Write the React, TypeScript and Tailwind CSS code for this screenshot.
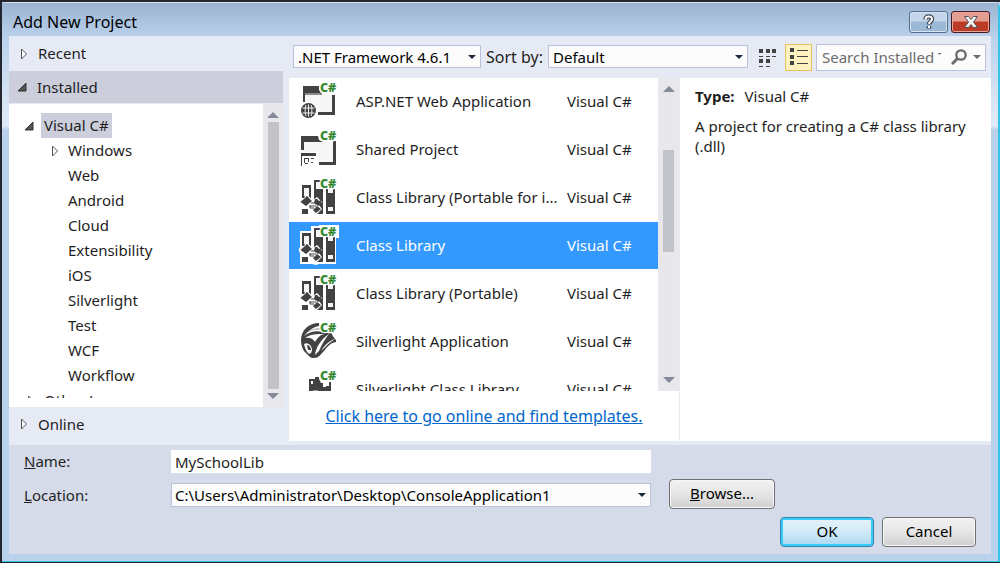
import type { ReactNode } from 'react';

const DARK = '#424242';

function CSharpMark() {
  return (
    <text
      x="21"
      y="10"
      fontFamily="Open Sans, Noto Sans, sans-serif"
      fontSize="12.5"
      fontWeight="800"
      fill="#388a34"
      stroke="#fff"
      strokeWidth="2.5"
      style={{ paintOrder: 'stroke' }}
    >
      C#
    </text>
  );
}

function IconFrame({ children }: { children: ReactNode }) {
  return (
    <svg viewBox="0 0 40 40" className="size-10 shrink-0 overflow-visible" aria-hidden="true">
      {children}
      <CSharpMark />
    </svg>
  );
}

function WebAppIcon() {
  return (
    <IconFrame>
      <path d="M6 13H34V30H6z" fill="#f7f7f7" />
      <path d="M4 4H20V8L22 11V11H4z" fill={DARK} />
      <path d="M5 11H23V13H5z" fill="#8a8a8a" />
      <path d="M4 11H6V20H4zM33 13H36V33H19V30H33z" fill={DARK} />
      <circle cx="9.5" cy="28.5" r="9" fill="#fff" />
      <circle cx="9.5" cy="28.5" r="7.5" fill={DARK} />
      <path d="M3.5 26H15.5M3.5 31H15.5M9.5 22.5V34.5M7 23C5.8 26 5.8 31 7 34M12 23C13.2 26 13.2 31 12 34" stroke="#f0f0f0" strokeWidth="1" fill="none" />
    </IconFrame>
  );
}

function SharedIcon() {
  return (
    <IconFrame>
      <path d="M4 12H35V32H4z" fill="#f7f7f7" />
      <path d="M2 6H19L20 10L24 12H2zM2 12H5V20H2zM34 11H37V35H20V32H34z" fill={DARK} />
      <path d="M1 22H18V37H1z" fill="#fff" />
      <path d="M2 23H17V26H2zM2 26H3V36H2zM5 28H10V29H6V33H5zM6 33H9V34H6zM9 29H10V32H9zM12 28H15V29H12zM12 32H14V33H12z" fill={DARK} />
    </IconFrame>
  );
}

function LibraryIcon({ selected = false }: { selected?: boolean }) {
  return (
    <IconFrame>
      {selected && <path d="M1 5H12V0H20V-1H40V12H37V38H20L17 39L13 38H1V27L-.5 24L1 21z" fill="#fff" />}
      <path d="M3 7H12V20H3z" fill={DARK} />
      <path d="M5 10H10V18H5z" fill="#f5f5f5" />
      <path d="M3 31H9V36H3zM15 2H22V11H24V36H15z" fill={DARK} />
      <path d="M17 4H22V11H17z" fill="#f5f5f5" />
      <path d="M27 11H36V36H27z" fill={DARK} />
      <path d="M29 10H34V15H29zM29 29H34V33H29z" fill="#f5f5f5" />
      <path d="M7 16L14 22L18 19L23 24L20 27L23 31L17 37L9 31L2 26z" fill="#fff" />
      <path d="M8 18L13 23L7 28L1.500 24zM16 21H18L20 23L22 22V26L19 28L15 25zM18 28L22 31L17 35L14 32z" fill={DARK} />
      <path d="M12 25H17M11 27V30H15M11 28H17" stroke={DARK} strokeWidth="1" fill="none" />
    </IconFrame>
  );
}

function SilverlightIcon() {
  return (
    <IconFrame>
      <path d="M2 18C2 8 10 1 20 1L20 4C14 5 9 9 5 14C10 10 17 8 24 10L32 10C34 15 36 17 37 18V20C31 21 28 25 25 29C21 33 20 36 15 36C11 36 10 34 8 32C4 29 2 24 2 18z" fill={DARK} />
      <path d="M6 12C10 8 15 6 20 6L22 8C15 7 10 9 6 12z" fill="#bbb" />
      <path d="M6 16C11 12 18 12 25 12C21 13 18 16 16 20C14 16 10 15 6 16zM16 33C17 26 21 18 30 12C26 17 23 22 20 29L16 33zM5 22C8 20 12 22 13 27C13 31 11 33 9 31C7 29 6 26 5 22zM22 29C26 22 32 18 36 17C31 20 27 24 22 29z" fill="#fff" />
      <path d="M8 23C10 23 12 25 12 28L9 28z" fill={DARK} />
    </IconFrame>
  );
}

function SilverlightLibraryIcon() {
  return (
    <IconFrame>
      <path d="M10 9H16V7H20V9L22 13H24V17H27V12H32V36H10z" fill={DARK} />
      <path d="M12 11H14V14H12zM27 12H30V16H27z" fill="#fff" />
      <path d="M14 20H19V21H14z" fill="#999" />
    </IconFrame>
  );
}

const templates = [
  { name: 'ASP.NET Web Application', icon: <WebAppIcon /> },
  { name: 'Shared Project', icon: <SharedIcon /> },
  { name: 'Class Library (Portable for i...', icon: <LibraryIcon /> },
  { name: 'Class Library', icon: <LibraryIcon selected />, selected: true },
  { name: 'Class Library (Portable)', icon: <LibraryIcon /> },
  { name: 'Silverlight Application', icon: <SilverlightIcon /> },
  { name: 'Silverlight Class Library', icon: <SilverlightLibraryIcon /> },
];

const languages = ['Windows', 'Web', 'Android', 'Cloud', 'Extensibility', 'iOS', 'Silverlight', 'Test', 'WCF', 'Workflow'];

function Closed() {
  return (
    <svg viewBox="0 0 10 12" className="h-3 w-2.5 shrink-0" aria-hidden="true">
      <path d="M2.5 1V11L7.5 6z" fill="#fff" stroke="#555" strokeWidth="1" />
    </svg>
  );
}

function Opened() {
  return (
    <svg viewBox="0 0 10 10" className="size-2.5 shrink-0" aria-hidden="true">
      <path d="M9 1V9H1z" fill="#555" stroke="#333" strokeWidth="1" />
    </svg>
  );
}

function Caret() {
  return (
    <svg viewBox="0 0 8 4" className="pointer-events-none absolute top-1/2 right-[5px] h-1 w-2 -translate-y-1/2" aria-hidden="true">
      <path d="M0 0H8L4 4z" fill="#1b293e" />
    </svg>
  );
}

function ScrollBar({ children }: { children: ReactNode }) {
  return (
    <div className="flex h-full w-full flex-col items-center gap-1 bg-[#e8e8ec] py-2" aria-hidden="true">
      <svg viewBox="0 0 12 6" className="h-1.5 w-3">
        <path d="M0 6H12L6 0z" fill="#868999" />
      </svg>
      <div className="flex w-full flex-1 flex-col items-center">{children}</div>
      <svg viewBox="0 0 12 6" className="h-1.5 w-3">
        <path d="M0 0H12L6 6z" fill="#868999" />
      </svg>
    </div>
  );
}

const grayButton =
  'h-[30px] rounded-[4px] border border-[#707070] bg-linear-to-b from-[#f2f2f2] from-0% via-[#e6e6e6] via-50% to-[#cfcfcf] pb-0.5 text-black shadow-[inset_0_0_0_1px_#f8f8f8]';

export default function App() {
  return (
    <div
      className="flex h-screen flex-col border-t-2 border-b border-l-2 border-[#23262f] bg-[#b9d1ea] text-[15px] text-[#1e1e1e]"
      style={{ fontFamily: '"Noto Sans", "Open Sans", sans-serif' }}
    >
      <div className="flex min-h-0 flex-1 flex-col rounded-t-md border-t border-r-2 border-b border-t-[#dce7f3] border-r-[#35c3e8] border-b-[#35c3e8]">
        <header className="flex h-[33px] shrink-0 items-center justify-between bg-linear-to-b from-[#9ab3d1] to-[#b8d0ea] pr-2 pl-[11px]">
          <h1 className="pt-1 text-base text-black">Add New Project</h1>
          <div className="flex gap-[3px] pt-1">
            <button aria-label="Help" className="flex h-[22px] w-[39px] items-center justify-center rounded-[3px] border border-[#566f8d] bg-linear-to-b from-[#c3d5e9] from-45% to-[#9bb8d6] to-50% shadow-[inset_0_0_0_1px_#d5e3f2]">
              <svg viewBox="0 0 12 16" className="h-4 w-3" fill="none" aria-hidden="true">
                <path d="M2.500 5.500C2.500 1.500 9 1.500 9 5C9 7.500 6 7.500 6 10.500M6 12V14.500" stroke="#3f4857" strokeWidth="4.500" />
                <path d="M2.500 5.500C2.500 1.500 9 1.500 9 5C9 7.500 6 7.500 6 10M6 12V14" stroke="#fff" strokeWidth="2" />
              </svg>
            </button>
            <button aria-label="Close" className="flex h-[22px] w-[39px] items-center justify-center rounded-[3px] border border-[#4d1520] bg-linear-to-b from-[#e49d90] from-45% to-[#bd3b25] to-50% shadow-[inset_0_0_0_1px_#e5a79c]">
              <svg viewBox="0 0 16 14" className="h-3.5 w-4" aria-hidden="true">
                <path d="M1.5 1.5H5.5L8 4.500L10.500 1.5H14.5L10.500 7L14.5 12.5H10.500L8 9.500L5.500 12.5H1.500L5.500 7z" fill="#f5f5f5" stroke="#53525c" />
              </svg>
            </button>
          </div>
        </header>

        <div className="flex min-h-0 flex-1 flex-col bg-linear-to-b from-[#b9d1ea] from-0% via-[#e2ebf7] via-17% to-[#b9d1ea] to-18% px-[7px]">
          <main className="flex min-h-0 flex-1 bg-[#e6eaf5] pb-1">
            <nav className="flex w-[280px] shrink-0 flex-col pr-1.5" aria-label="Template categories">
              <button className="flex h-[35px] shrink-0 items-center gap-2 pl-2.5 text-left">
                <Closed />
                <span className="pl-px">Recent</span>
              </button>
              <button className="flex h-8 shrink-0 items-center gap-2.5 bg-[#cccedb] pl-2 text-left">
                <Opened />
                <span>Installed</span>
              </button>
              <div className="mt-px flex min-h-0 flex-1 bg-white">
                <div className="min-w-0 flex-1 pt-[9px] pb-[9px]">
                  <ul className="h-full overflow-hidden">
                    <li>
                      <div className="flex h-[25px] items-center gap-[7px] pl-[15px]">
                        <Opened />
                        <button className="h-[25px] bg-[#cccedb] px-[3px]">Visual C#</button>
                      </div>
                      <ul>
                        {languages.map((l) => (
                          <li key={l} className="flex h-[25px] items-center gap-2 pl-[41px]">
                            {l === 'Windows' ? <Closed /> : <span className="w-2.5" />}
                            <button>{l}</button>
                          </li>
                        ))}
                      </ul>
                    </li>
                    <li className="flex h-[25px] items-center gap-2 pl-[17px]">
                      <Closed />
                      <button>Other Languages</button>
                    </li>
                  </ul>
                </div>
                <div className="w-5 shrink-0">
                  <ScrollBar>
                    <div className="w-[11px] flex-1 bg-[#c2c3c9]" />
                  </ScrollBar>
                </div>
              </div>
              <button className="flex h-[34px] shrink-0 items-center gap-2 pl-2.5 text-left">
                <Closed />
                <span className="pl-px">Online</span>
              </button>
            </nav>

            <div className="flex min-w-0 flex-1 flex-col">
              <div className="flex h-[42px] shrink-0 items-center pr-[5px] pl-1">
                <div className="relative w-[188px] shrink-0">
                  <select aria-label="Framework" className="h-[23px] w-full appearance-none border border-[#b9c1dd] bg-[#fcfcfc] px-1 text-black">
                    <option>.NET Framework 4.6.1</option>
                  </select>
                  <Caret />
                </div>
                <label htmlFor="sort" className="w-[67px] shrink-0 pl-[5px] text-base whitespace-nowrap">Sort by:</label>
                <div className="relative w-[200px] shrink-0">
                  <select id="sort" className="h-[23px] w-full appearance-none border border-[#b9c1dd] bg-[#fcfcfc] px-1 text-black">
                    <option>Default</option>
                  </select>
                  <Caret />
                </div>
                <button aria-label="Small icons" className="ml-1.5 flex size-[27px] shrink-0 items-center justify-center">
                  <svg viewBox="0 0 18 19" className="h-[19px] w-[18px]" fill={DARK} aria-hidden="true">
                    <path d="M0 1H4V5H0zM7 1H11V5H7zM13 1H17V5H13zM0 11H4V15H0zM7 11H11V15H7zM0 8H4V9H0zM7 8H11V9H7zM13 8H17V9H13zM0 18H4V19H0zM7 18H11V19H7z" />
                  </svg>
                </button>
                <button aria-label="List" aria-pressed="true" className="ml-1 flex size-[27px] shrink-0 items-center justify-center border border-[#e5c365] bg-[#fff2c0]">
                  <svg viewBox="0 0 18 18" className="size-[18px]" fill={DARK} aria-hidden="true">
                    <path d="M0 0H4V4H0zM0 7H4V11H0zM0 13H4V17H0zM7 2H18V3H7zM7 8H18V9H7zM7 15H18V16H7z" />
                  </svg>
                </button>
                <div className="ml-1 flex h-[27px] min-w-0 flex-1 items-center border border-[#b9c1dd] bg-[#fcfcfc] pr-1 pl-[5px]">
                  <input aria-label="Search" placeholder="Search Installed Templates" className="min-w-0 flex-1 bg-transparent outline-none placeholder:text-[#6d6d6d]" />
                  <button aria-label="Run search" className="ml-2.5 shrink-0">
                    <svg viewBox="0 0 16 16" className="size-4" fill="none" stroke="#6a6a6a" aria-hidden="true">
                      <circle cx="10" cy="6" r="4.700" strokeWidth="2.300" />
                      <path d="M6.500 9.500L1 15" strokeWidth="3" />
                    </svg>
                  </button>
                  <button aria-label="Search options" className="ml-1.5 shrink-0">
                    <svg viewBox="0 0 8 4" className="h-1 w-2" aria-hidden="true">
                      <path d="M0 0H8L4 4z" fill="#6a6a6a" />
                    </svg>
                  </button>
                </div>
              </div>

              <div className="flex min-h-0 flex-1 bg-white">
                <section className="flex w-[391px] shrink-0 flex-col border-r border-[#e6eaf5]" aria-label="Templates">
                  <div className="flex min-h-0 flex-1">
                    <ul className="min-w-0 flex-1 overflow-hidden">
                      {templates.map((t) => (
                        <li key={t.name}>
                          <button
                            className={
                              t.selected
                                ? 'flex h-12 w-full items-center border-b border-white bg-[#3399ff] pl-2.5 text-left text-white'
                                : 'flex h-12 w-full items-center border-b border-transparent pl-2.5 text-left'
                            }
                          >
                            {t.icon}
                            <span className="ml-[17px] w-[211px] shrink-0 pb-px whitespace-nowrap">{t.name}</span>
                            <span className="pb-px whitespace-nowrap">Visual C#</span>
                          </button>
                        </li>
                      ))}
                    </ul>
                    <div className="w-[21px] shrink-0">
                      <ScrollBar>
                        <div className="flex-[54]" />
                        <div className="w-[11px] flex-[102] bg-[#c2c3c9]" />
                        <div className="flex-[121]" />
                      </ScrollBar>
                    </div>
                  </div>
                  <p className="h-[50px] shrink-0 pt-[13px] text-center text-base">
                    <a href="#templates" className="text-[#0066cc] underline">
                      Click here to go online and find templates.
                    </a>
                  </p>
                </section>
                <aside className="min-w-0 flex-1 pt-[7px] pr-1 pl-[15px]">
                  <p>
                    <b className="mr-2.5">Type:</b>Visual C#
                  </p>
                  <p className="pt-2 leading-5">A project for creating a C# class library (.dll)</p>
                </aside>
              </div>
            </div>
          </main>

          <form className="shrink-0 bg-[#d6dbe9] pt-[5px] pr-[15px] pb-[7px] pl-[15px]" onSubmit={(e) => e.preventDefault()}>
            <div className="grid grid-cols-[147px_minmax(0,480px)_auto] items-center">
              <label htmlFor="name"><u>N</u>ame:</label>
              <input id="name" defaultValue="MySchoolLib" className="h-[23px] bg-white px-1 outline-none" />
              <span />
              <label htmlFor="location"><u>L</u>ocation:</label>
              <div className="relative">
                <select id="location" className="h-6 w-full appearance-none border border-[#b9c1dd] bg-[#fcfcfc] px-[3px] text-black">
                  <option>C:\Users\Administrator\Desktop\ConsoleApplication1</option>
                </select>
                <Caret />
              </div>
              <div className="pt-1.5 pb-2 pl-[18px]">
                <button type="button" className={grayButton + ' w-[106px]'}><u>B</u>rowse...</button>
              </div>
            </div>
            <div className="flex justify-end gap-2">
              <button className="h-[30px] w-[94px] rounded-[4px] border border-[#3c7fb1] bg-linear-to-b from-[#e6f3fa] from-0% via-[#d0eaf7] via-50% to-[#a9d8ef] pb-0.5 text-black shadow-[inset_0_0_0_2px_#35cdf5]">OK</button>
              <button type="button" className={grayButton + ' w-[94px]'}>Cancel</button>
            </div>
          </form>
          <div className="h-[7px] shrink-0" />
        </div>
      </div>
    </div>
  );
}
